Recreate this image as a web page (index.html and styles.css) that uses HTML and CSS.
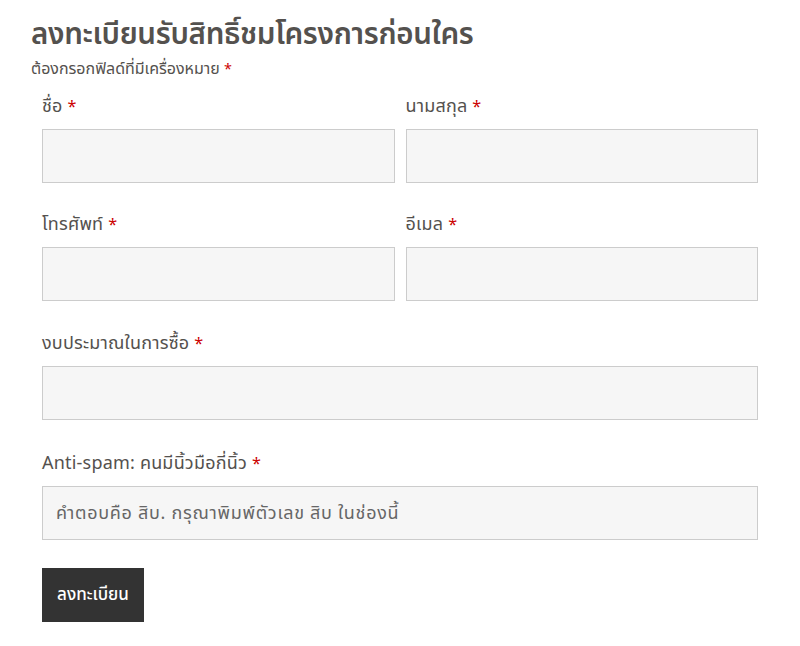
FILE: index.html
```html
<!DOCTYPE html>
<html lang="th">
<head>
<meta charset="utf-8">
<title>ลงทะเบียน</title>
<link rel="stylesheet" href="styles.css">
</head>
<body>
<div class="page">
  <h2 class="title">ลงทะเบียนรับสิทธิ์ชมโครงการก่อนใคร</h2>
  <p class="note">ต้องกรอกฟิลด์ที่มีเครื่องหมาย <span class="req">*</span></p>
  <form class="form">
    <div class="row two">
      <div class="field">
        <label class="label">ชื่อ <span class="req">*</span></label>
        <input class="input" type="text">
      </div>
      <div class="field">
        <label class="label">นามสกุล <span class="req">*</span></label>
        <input class="input" type="text">
      </div>
    </div>
    <div class="row two gap-31">
      <div class="field">
        <label class="label">โทรศัพท์ <span class="req">*</span></label>
        <input class="input" type="text">
      </div>
      <div class="field">
        <label class="label">อีเมล <span class="req">*</span></label>
        <input class="input" type="text">
      </div>
    </div>
    <div class="row gap-32">
      <div class="field">
        <label class="label">งบประมาณในการซื้อ <span class="req">*</span></label>
        <input class="input" type="text">
      </div>
    </div>
    <div class="row">
      <div class="field">
        <label class="label">Anti-spam: คนมีนิ้วมือกี่นิ้ว <span class="req">*</span></label>
        <input class="input" type="text" placeholder="คำตอบคือ สิบ. กรุณาพิมพ์ตัวเลข สิบ ในช่องนี้">
      </div>
    </div>
    <button class="btn" type="button">ลงทะเบียน</button>
  </form>
</div>
</body>
</html>
```

FILE: styles.css
```css
html, body {
  margin: 0;
  padding: 0;
  background: #ffffff;
}
body {
  font-family: "Noto Sans Thai", "Noto Sans Thai UI", "Noto Sans", "DejaVu Sans", sans-serif;
  color: #54514e;
}
.page {
  padding: 15px 42px 0 31px;
}
.title {
  margin: 0;
  font-size: 29.5px;
  line-height: 40px;
  font-weight: 600;
  color: #54514e;
  letter-spacing: -0.3px;
}
.note {
  margin: 3px 0 0 0;
  font-size: 16px;
  line-height: 22px;
  color: #54514e;
}
.req {
  color: #cc0000;
  font-size: 0.9em;
}
.form {
  padding-left: 11px;
  margin-top: 14px;
}
.row {
  display: grid;
  grid-template-columns: 1fr;
  column-gap: 11px;
  margin-bottom: 30px;
}
.row.two {
  grid-template-columns: 1fr 1fr;
}
.row.gap-31 {
  margin-bottom: 31px;
}
.row.gap-32 {
  margin-bottom: 32px;
}
.field {
  display: flex;
  flex-direction: column;
}
.label {
  font-size: 18px;
  line-height: 24px;
  margin-bottom: 10px;
  letter-spacing: 0.2px;
  color: #54514e;
}
.input {
  box-sizing: border-box;
  height: 54px;
  width: 100%;
  margin: 0;
  border: 1px solid #cccccc;
  background: #f6f6f6;
  padding: 0 13px;
  font-family: inherit;
  font-size: 18px;
  letter-spacing: 0.7px;
  color: #555555;
}
.input::placeholder {
  color: #666666;
}
.btn {
  display: block;
  margin-top: -2px;
  width: 102px;
  height: 54px;
  border: 0;
  background: #333333;
  color: #ffffff;
  font-family: inherit;
  font-size: 17px;
  font-weight: 500;
  padding: 0;
}
```
